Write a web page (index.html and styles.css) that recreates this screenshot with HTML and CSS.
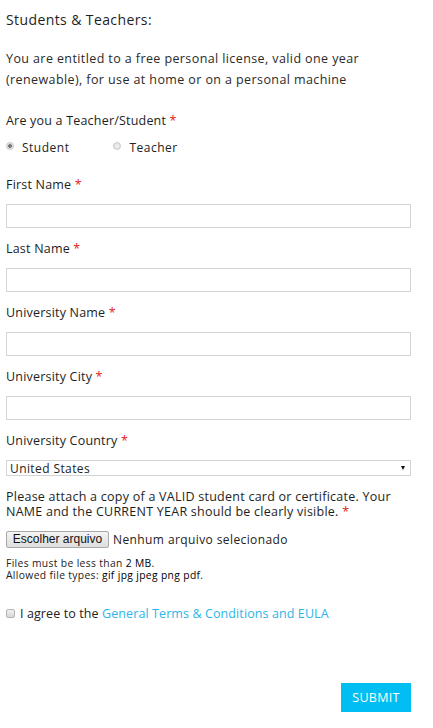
FILE: index.html
```html
<!DOCTYPE html>
<html>
<head>
<meta charset="utf-8">
<link rel="stylesheet" href="styles.css">
</head>
<body>
<form class="form">
  <h2 class="title">Students &amp; Teachers:</h2>
  <p class="intro">You are entitled to a free personal license, valid one year (renewable), for use at home or on a personal machine</p>

  <div class="label q">Are you a Teacher/Student <span class="req">*</span></div>
  <div class="radios">
    <label class="radio"><input type="radio" name="role" checked><span>Student</span></label>
    <label class="radio"><input type="radio" name="role"><span>Teacher</span></label>
  </div>

  <div class="field first">
    <div class="label">First Name <span class="req">*</span></div>
    <input class="text" type="text">
  </div>
  <div class="field">
    <div class="label">Last Name <span class="req">*</span></div>
    <input class="text" type="text">
  </div>
  <div class="field">
    <div class="label">University Name <span class="req">*</span></div>
    <input class="text" type="text">
  </div>
  <div class="field">
    <div class="label">University City <span class="req">*</span></div>
    <input class="text" type="text">
  </div>
  <div class="field">
    <div class="label">University Country <span class="req">*</span></div>
    <div class="select"><span>United States</span><span class="arrow"></span></div>
  </div>

  <p class="attach">Please attach a copy of a VALID student card or certificate. Your NAME and the CURRENT YEAR should be clearly visible. <span class="req">*</span></p>
  <div class="file"><span class="filebtn">Escolher arquivo</span><span class="filename">Nenhum arquivo selecionado</span></div>
  <div class="hint">
    <div class="hint-line">Files must be less than <b>2 MB</b>.</div>
    <div class="hint-line">Allowed file types: <b>gif jpg jpeg png pdf</b>.</div>
  </div>

  <label class="agree"><input type="checkbox" class="check"><span>I agree to the <a href="#" class="link">General Terms &amp; Conditions and EULA</a></span></label>

  <div class="actions"><button type="button" class="submit">SUBMIT</button></div>
</form>
</body>
</html>
```
FILE: styles.css
```css
html, body {
  margin: 0;
  padding: 0;
  background: #fff;
}
body {
  font-family: "Open Sans", "Noto Sans", sans-serif;
  color: #222;
}
.form {
  width: 405px;
  padding: 0 6px;
}
.title {
  margin: 10px 0 0;
  font-size: 14px;
  font-weight: normal;
  line-height: 20px;
  letter-spacing: 0.4px;
  color: #1e1e1e;
}
.intro {
  margin: 18px 0 0;
  font-size: 12.5px;
  line-height: 21px;
  letter-spacing: 0.4px;
  color: #2a2a2a;
}
.label {
  font-size: 12.5px;
  line-height: 20px;
  letter-spacing: 0.2px;
  color: #1e1e1e;
}
.q {
  margin-top: 21px;
}
.req {
  color: #e51c23;
}
.radios {
  display: flex;
  gap: 44px;
  margin-top: 6px;
  height: 20px;
  align-items: center;
  font-size: 12px;
  letter-spacing: 0.5px;
}
.radio {
  display: flex;
  align-items: center;
  gap: 8px;
}
.radio input {
  appearance: none;
  -webkit-appearance: none;
  margin: 0;
  width: 8px;
  height: 8px;
  border-radius: 50%;
  border: 1px solid #c8c8c8;
  background: radial-gradient(circle, #f2f2f2 0, #dcdcdc 100%);
  position: relative;
  top: -1px;
}
.radio input:checked {
  background: radial-gradient(circle, #7a7a7a 0, #7a7a7a 1.6px, #e2e2e2 2.2px, #e2e2e2 100%);
}
.field {
  margin-top: 11px;
}
.field.first {
  margin-top: 18px;
}
.text {
  display: block;
  box-sizing: border-box;
  margin: 9px 0 0;
  width: 405px;
  height: 24px;
  border: 1px solid #d4d4d4;
  background: #fff;
  padding: 0 4px;
  outline: none;
}
.select {
  box-sizing: border-box;
  margin-top: 9px;
  width: 405px;
  height: 16px;
  border: 1px solid #d4d4d4;
  display: flex;
  align-items: center;
  justify-content: space-between;
  padding: 0 5px 0 3px;
  font-size: 12px;
  letter-spacing: 0.4px;
  color: #222;
}
.arrow {
  width: 0;
  height: 0;
  border-left: 2.5px solid transparent;
  border-right: 2.5px solid transparent;
  border-top: 4px solid #111;
}
.attach {
  margin: 13px 0 0;
  font-size: 12.5px;
  line-height: 15px;
  letter-spacing: 0.25px;
  color: #1e1e1e;
}
.file {
  margin-top: 12px;
  display: flex;
  align-items: center;
  gap: 4px;
  height: 17px;
}
.filebtn {
  box-sizing: border-box;
  height: 17px;
  width: 103px;
  border: 1px solid #a9a9a9;
  border-radius: 2px;
  background: linear-gradient(#f4f4f4, #dedede);
  font-family: "Liberation Sans", Arial, sans-serif;
  font-size: 12px;
  line-height: 15px;
  text-align: center;
  color: #111;
}
.filename {
  font-size: 12px;
  letter-spacing: 0.4px;
  color: #222;
}
.hint {
  margin-top: 9px;
  font-size: 10.3px;
  letter-spacing: 0.35px;
  color: #222;
}
.hint-line {
  height: 12px;
  line-height: 12px;
  overflow: visible;
}
.hint b {
  font-weight: normal;
  color: #000;
}
.agree {
  margin-top: 22px;
  display: flex;
  align-items: center;
  gap: 5px;
  height: 20px;
  font-size: 12.5px;
  letter-spacing: 0.1px;
  color: #222;
}
.check {
  appearance: none;
  -webkit-appearance: none;
  margin: 0;
  width: 9px;
  height: 9px;
  border: 1px solid #b5b5b5;
  border-radius: 2px;
  background: linear-gradient(#f0f0f0, #d8d8d8);
}
.link {
  color: #2bb5e8;
  text-decoration: none;
}
.actions {
  display: flex;
  justify-content: flex-end;
  margin-top: 60px;
}
.submit {
  width: 70px;
  height: 29px;
  border: none;
  background: #00bef2;
  color: #fff;
  font-family: "Open Sans", "Noto Sans", sans-serif;
  font-size: 12.5px;
  letter-spacing: 0.3px;
  padding: 0;
}
```
